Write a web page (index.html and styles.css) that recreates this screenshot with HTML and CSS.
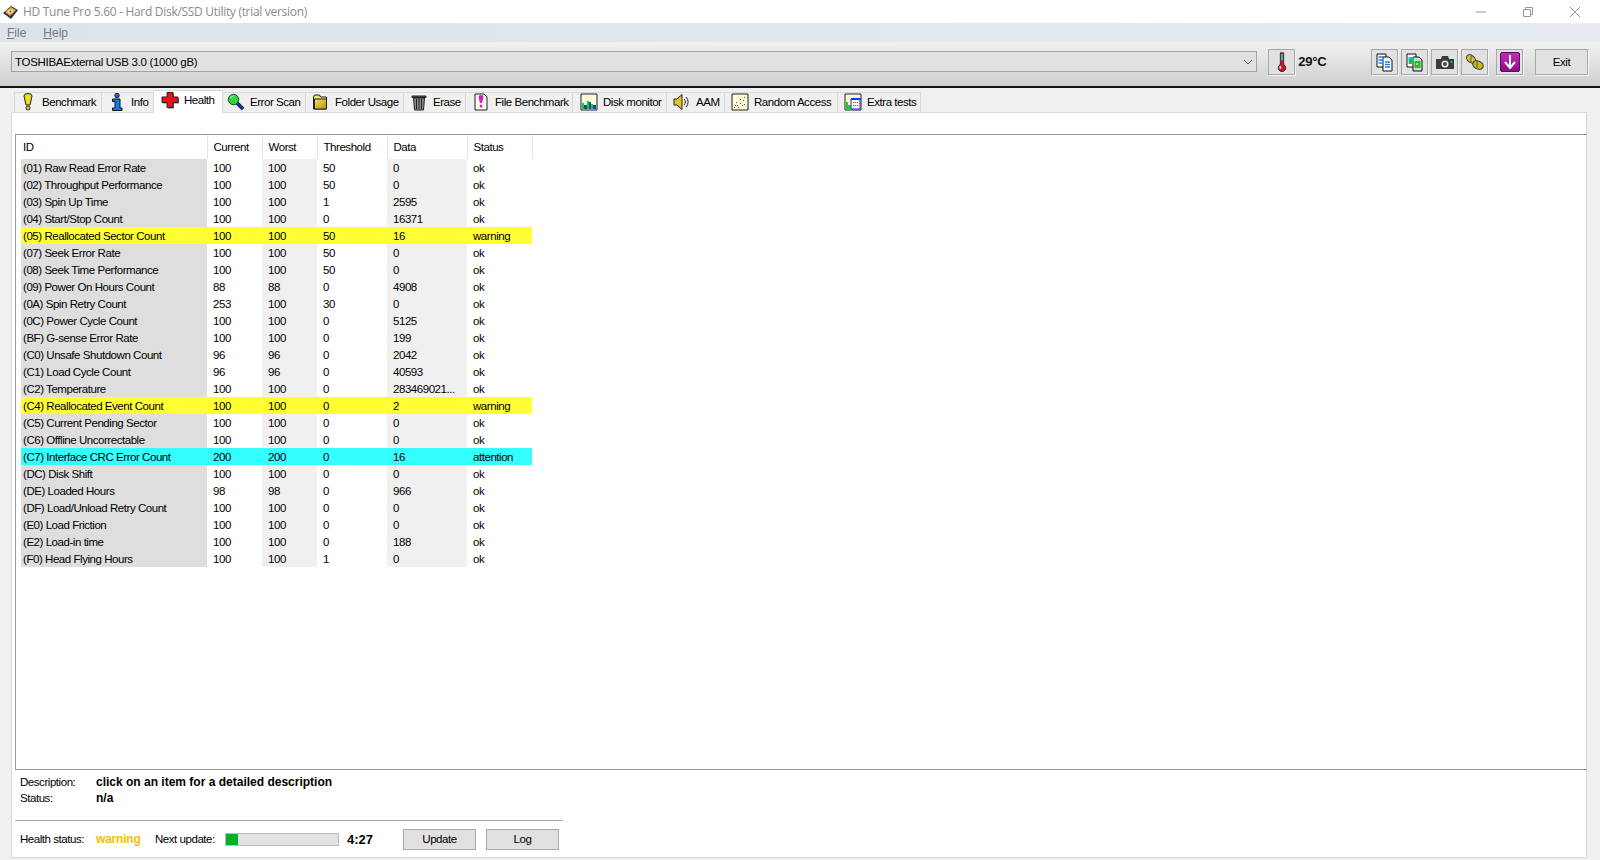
FILE: index.html
```html
<!DOCTYPE html>
<html lang="en">
<head>
    <meta charset="UTF-8">
    <title>HD Tune Pro 5.60 - Hard Disk/SSD Utility (trial version)</title>
    <link rel="stylesheet" href="styles.css">
</head>
<body>
    <div id="titlebar">
        <svg class="appicon" viewBox="0 0 18 18"><path d="M1 10 9 3l7 4-7 9z" fill="#333"/><path d="M3 9l6-5 5 3-6 6z" fill="#e0a848"/><ellipse cx="8.500" cy="8.500" rx="3" ry="2" fill="#f4d890"/><circle cx="8.500" cy="8.500" r="1" fill="#555"/></svg>
        <span class="titletext">HD Tune Pro 5.60 - Hard Disk/SSD Utility (trial version)</span>
        <div class="winbtns">
            <svg viewBox="0 0 12 12"><path d="M1 6h10" stroke="#999" fill="none"/></svg>
            <svg viewBox="0 0 12 12"><path d="M1.500 3.500h7v7h-7zM3.500 3.500v-2h7v7h-2" stroke="#999" fill="none"/></svg>
            <svg viewBox="0 0 12 12"><path d="M1 1l10 10M11 1 1 11" stroke="#999" fill="none"/></svg>
        </div>
    </div>
    <div id="menubar">
        <span><u>F</u>ile</span>
        <span><u>H</u>elp</span>
    </div>
    <div id="toolbar">
        <div class="combo">
            <span>TOSHIBAExternal USB 3.0 (1000 gB)</span>
            <svg viewBox="0 0 10 6"><path d="M1 1l4 4 4-4" stroke="#555" fill="none"/></svg>
        </div>
        <div class="toolbtn temp">
            <svg viewBox="0 0 18 24"><path d="M7 1h4v14a4.500 4.500 0 1 1-4 0z" fill="#c8181c" stroke="#222"/><path d="M8 2h2v8H8z" fill="#30c8d8"/><path d="M6 17h2v3H6z" fill="#fff"/></svg>
        </div>
        <span class="temptext">29°C</span>
        <div class="toolgroup">
            <div class="toolbtn">
                <svg viewBox="0 0 20 20"><path d="M2 2h9v13H2z" fill="#fff" stroke="#111"/><path d="M8 5h6l3 3v11H8z" fill="#fff" stroke="#111"/><path d="M3.500 5h6M3.500 8h4M3.500 11h4M10 10h5M10 12.500h5M10 15h5" stroke="#1880f0" stroke-width="1.300"/></svg>
            </div>
            <div class="toolbtn">
                <svg viewBox="0 0 20 20"><path d="M2 2h9v13H2z" fill="#fff" stroke="#111"/><path d="M8 5h6l3 3v11H8z" fill="#d8d8d8" stroke="#111"/><path d="M3.500 5h5v7h-5z" fill="#18b8d8"/><path d="M4.500 7h3v4h-3z" fill="#20c020"/><path d="M9.500 9h6v7h-6z" fill="#18c030"/><path d="M11 11h2v2h-2z" fill="#e0d020"/></svg>
            </div>
            <div class="toolbtn">
                <svg viewBox="0 0 20 20"><path d="M1 7h5l1-3h6l1 3h5v10H1z" fill="#3a3a3a"/><circle cx="10" cy="12" r="3.500" fill="#f0f0f0"/><circle cx="10" cy="12" r="2" fill="#444"/><path d="M15.500 9h2v2h-2z" fill="#20c040"/></svg>
            </div>
            <div class="toolbtn">
                <svg viewBox="0 0 20 20"><ellipse cx="6" cy="7" rx="5" ry="3.500" transform="rotate(40 6 7)" fill="#d8c820" stroke="#333"/><ellipse cx="13" cy="13" rx="5.500" ry="4" transform="rotate(25 13 13)" fill="#c8b818" stroke="#333"/><path d="M6 2v8M12 9v7" stroke="#777" stroke-width="1.500"/></svg>
            </div>
            <div class="toolbtn purple">
                <svg viewBox="0 0 20 20"><defs><linearGradient id="purplefill" x1="0" y1="0" x2="0" y2="1"><stop offset="0" stop-color="#c030b8"/><stop offset="1" stop-color="#90088c"/></linearGradient></defs><rect x="0.500" y="0.500" width="19" height="19" rx="1.500" fill="url(#purplefill)" stroke="#60085c"/><path d="M10 3v12M5 10l5 6 5-6" stroke="#fff" stroke-width="2" fill="none"/></svg>
            </div>
        </div>
        <div class="exitbtn">Exit</div>
    </div>
    <div id="tabs">
        <div class="tab">
            <svg viewBox="0 0 18 18"><path d="M5 3a4 2.500 0 0 1 8 0l-2 9H7z" fill="#e8e020" stroke="#222"/><circle cx="9" cy="15" r="2" fill="#e8e020" stroke="#222"/></svg>
            <span>Benchmark</span>
        </div>
        <div class="tab">
            <svg viewBox="0 0 18 18"><circle cx="9" cy="2.500" r="2.200" fill="#1878e8" stroke="#111"/><path d="M4.500 6H12v9h2v2.500H4.500V15H7V8.500H4.500z" fill="#1878e8" stroke="#111"/></svg>
            <span>Info</span>
        </div>
        <div class="tab active">
            <svg viewBox="0 0 18 18"><path d="M7 2.500h6v4.500h5v5.500h-5v5H7v-5H2V7h5z" fill="#777"/><path d="M6 1.500h6v4.500h5v5.500h-5v5H6v-5H1V6h5z" fill="#e8141c" stroke="#222"/></svg>
            <span>Health</span>
        </div>
        <div class="tab">
            <svg viewBox="0 0 18 18"><path d="M10 10l6 6" stroke="#111" stroke-width="3.500"/><path d="M10 10l6 6" stroke="#1038c8" stroke-width="2"/><circle cx="6.500" cy="6.500" r="5.200" fill="#30d838" stroke="#185018"/><path d="M3.500 5a3 3 0 0 1 3-2" stroke="#d0ffd0" fill="none"/></svg>
            <span>Error Scan</span>
        </div>
        <div class="tab">
            <svg viewBox="0 0 18 18"><defs><linearGradient id="folderfill" x1="0" y1="0" x2="1" y2="1"><stop offset="0" stop-color="#f4e468"/><stop offset="1" stop-color="#c09000"/></linearGradient></defs><path d="M1.500 4l1-2h5l1 2h6v12h-13z" fill="#f0e070" stroke="#222"/><path d="M2.500 6h12v10h-12z" fill="url(#folderfill)" stroke="#222"/></svg>
            <span>Folder Usage</span>
        </div>
        <div class="tab">
            <svg viewBox="0 0 18 18"><path d="M2 3h14v1.500H2z" fill="#555" stroke="#222"/><path d="M3.500 5h11l-1 12h-9z" fill="#8a8a8a" stroke="#222"/><path d="M6.500 6v10M9 6v10M11.500 6v10" stroke="#222"/></svg>
            <span>Erase</span>
        </div>
        <div class="tab">
            <svg viewBox="0 0 18 18"><path d="M3 1h9l3 3v13H3z" fill="#fffce8" stroke="#222"/><path d="M6.500 4a2.500 2 0 0 1 5 0l-1.500 6H8z" fill="#d020c8"/><circle cx="9" cy="13" r="1.500" fill="#d020c8"/></svg>
            <span>File Benchmark</span>
        </div>
        <div class="tab">
            <svg viewBox="0 0 18 18"><path d="M1 1h16v16H1z" fill="#fdfbd8" stroke="#222"/><path d="M2 10h2v6H2zM7 8h2v8H7zM11 11h2v5h-2z" fill="#10d818"/><path d="M4 12h3v4H4zM9 9h2v7H9zM13 12h3v4h-3z" fill="#1838d8"/></svg>
            <span>Disk monitor</span>
        </div>
        <div class="tab">
            <svg viewBox="0 0 18 18"><path d="M1 6h3l5-4.500v15L4 12H1z" fill="#e0c820" stroke="#222"/><path d="M11 6a4 4 0 0 1 0 6M13 4a7 7 0 0 1 0 10" stroke="#222" fill="none"/></svg>
            <span>AAM</span>
        </div>
        <div class="tab">
            <svg viewBox="0 0 18 18"><path d="M1 1h16v16H1z" fill="#fdfbd8" stroke="#222"/><path d="M3 14h1v1H3zM6 12h1v1H6zM9 10h1v1H9zM12 7h1v1h-1zM7 14h1v1H7zM11 12h1v1h-1z" fill="#e02020"/><path d="M5 9h1v1H5zM9 6h1v1H9zM13 11h1v1h-1zM13 4h1v1h-1zM4 12h1v1H4z" fill="#2040d8"/></svg>
            <span>Random Access</span>
        </div>
        <div class="tab">
            <svg viewBox="0 0 18 18"><path d="M1 1h16v16H1z" fill="#fdfbd8" stroke="#222"/><path d="M2 9h2v7H2zM4 12h3v4H4z" fill="#10d818"/><path d="M7 6h9v10H7z" fill="#fff" stroke="#1838d8"/><path d="M7 5h10v2H7z" fill="#1838d8"/><path d="M9 9h1v1H9zM11 9h1v1h-1zM13 9h1v1h-1zM9 12h1v1H9zM11 12h1v1h-1zM13 12h1v1h-1z" fill="#e02020"/></svg>
            <span>Extra tests</span>
        </div>
    </div>
    <div id="panel">
        <div id="tablebox">
            <table>
                <thead>
                    <tr><th>ID</th><th>Current</th><th>Worst</th><th>Threshold</th><th>Data</th><th>Status</th></tr>
                </thead>
                <tbody>
                    <tr><td>(01) Raw Read Error Rate</td><td>100</td><td>100</td><td>50</td><td>0</td><td>ok</td></tr>
                    <tr><td>(02) Throughput Performance</td><td>100</td><td>100</td><td>50</td><td>0</td><td>ok</td></tr>
                    <tr><td>(03) Spin Up Time</td><td>100</td><td>100</td><td>1</td><td>2595</td><td>ok</td></tr>
                    <tr><td>(04) Start/Stop Count</td><td>100</td><td>100</td><td>0</td><td>16371</td><td>ok</td></tr>
                    <tr class="warn"><td>(05) Reallocated Sector Count</td><td>100</td><td>100</td><td>50</td><td>16</td><td>warning</td></tr>
                    <tr><td>(07) Seek Error Rate</td><td>100</td><td>100</td><td>50</td><td>0</td><td>ok</td></tr>
                    <tr><td>(08) Seek Time Performance</td><td>100</td><td>100</td><td>50</td><td>0</td><td>ok</td></tr>
                    <tr><td>(09) Power On Hours Count</td><td>88</td><td>88</td><td>0</td><td>4908</td><td>ok</td></tr>
                    <tr><td>(0A) Spin Retry Count</td><td>253</td><td>100</td><td>30</td><td>0</td><td>ok</td></tr>
                    <tr><td>(0C) Power Cycle Count</td><td>100</td><td>100</td><td>0</td><td>5125</td><td>ok</td></tr>
                    <tr><td>(BF) G-sense Error Rate</td><td>100</td><td>100</td><td>0</td><td>199</td><td>ok</td></tr>
                    <tr><td>(C0) Unsafe Shutdown Count</td><td>96</td><td>96</td><td>0</td><td>2042</td><td>ok</td></tr>
                    <tr><td>(C1) Load Cycle Count</td><td>96</td><td>96</td><td>0</td><td>40593</td><td>ok</td></tr>
                    <tr><td>(C2) Temperature</td><td>100</td><td>100</td><td>0</td><td>283469021...</td><td>ok</td></tr>
                    <tr class="warn"><td>(C4) Reallocated Event Count</td><td>100</td><td>100</td><td>0</td><td>2</td><td>warning</td></tr>
                    <tr><td>(C5) Current Pending Sector</td><td>100</td><td>100</td><td>0</td><td>0</td><td>ok</td></tr>
                    <tr><td>(C6) Offline Uncorrectable</td><td>100</td><td>100</td><td>0</td><td>0</td><td>ok</td></tr>
                    <tr class="attn"><td>(C7) Interface CRC Error Count</td><td>200</td><td>200</td><td>0</td><td>16</td><td>attention</td></tr>
                    <tr><td>(DC) Disk Shift</td><td>100</td><td>100</td><td>0</td><td>0</td><td>ok</td></tr>
                    <tr><td>(DE) Loaded Hours</td><td>98</td><td>98</td><td>0</td><td>966</td><td>ok</td></tr>
                    <tr><td>(DF) Load/Unload Retry Count</td><td>100</td><td>100</td><td>0</td><td>0</td><td>ok</td></tr>
                    <tr><td>(E0) Load Friction</td><td>100</td><td>100</td><td>0</td><td>0</td><td>ok</td></tr>
                    <tr><td>(E2) Load-in time</td><td>100</td><td>100</td><td>0</td><td>188</td><td>ok</td></tr>
                    <tr><td>(F0) Head Flying Hours</td><td>100</td><td>100</td><td>1</td><td>0</td><td>ok</td></tr>
                </tbody>
            </table>
        </div>
        <div class="descrow">
            <span class="lbl">Description:</span><b>click on an item for a detailed description</b>
        </div>
        <div class="descrow">
            <span class="lbl">Status:</span><b>n/a</b>
        </div>
        <div class="statusrow">
            <span class="lbl">Health status:</span>
            <b class="hwarn">warning</b>
            <span class="nextlbl">Next update:</span>
            <div class="progress"><div class="fill"></div></div>
            <b class="time">4:27</b>
            <div class="btn">Update</div>
            <div class="btn">Log</div>
        </div>
    </div>
</body>
</html>
```

FILE: styles.css
```css
*{
    margin: 0;
    padding: 0;
    box-sizing: border-box;
}
body{
    width: 1600px;
    height: 860px;
    overflow: hidden;
    background-color: #f0f0f0;
    font-family: "Liberation Sans", Arial, sans-serif;
    font-size: 11.5px;
    letter-spacing: -0.45px;
    color: #000;
    display: flex;
    flex-direction: column;
}
#titlebar{
    height: 23px;
    background-color: #fff;
    display: flex;
    align-items: center;
    padding-left: 2px;
}
.appicon{
    width: 18px;
    height: 18px;
}
.titletext{
    margin-left: 3px;
    font-family: "Open Sans", sans-serif;
    font-size: 12px;
    letter-spacing: -0.3px;
    color: #8a8a8a;
}
.winbtns{
    margin-left: auto;
    display: flex;
    gap: 35px;
    padding-right: 19px;
}
.winbtns svg{
    width: 12px;
    height: 12px;
}
#menubar{
    height: 19px;
    background: linear-gradient(to right, #dbe3eb, #e7ecf3);
    display: flex;
    align-items: center;
    gap: 17px;
    padding-left: 7px;
    font-size: 12px;
    letter-spacing: 0;
    color: #777;
}
#toolbar{
    height: 46px;
    background: linear-gradient(#f1f1f1, #cfcfcf);
    border-bottom: 2px solid #111;
    display: flex;
    align-items: flex-start;
    padding: 7px 12px 0 11px;
}
.combo{
    width: 1249px;
    height: 21px;
    margin-top: 2px;
    border: 1px solid #a2a2a2;
    background-color: #e1e1e1;
    display: flex;
    align-items: center;
    justify-content: space-between;
    padding: 0 3px 0 3px;
    letter-spacing: -0.3px;
}
.combo svg{
    width: 10px;
    height: 6px;
}
.toolbtn{
    width: 27px;
    height: 26px;
    border: 1px solid #a8a8a8;
    box-shadow: 1px 1px 0 #f4f4f4;
    background-color: #e1e1e1;
    display: flex;
    align-items: center;
    justify-content: center;
}
.toolbtn svg{
    width: 20px;
    height: 20px;
}
.temp{
    margin-left: 11px;
}
.temptext{
    width: 32px;
    margin-left: 3px;
    line-height: 26px;
    font-size: 13px;
    font-weight: bold;
    letter-spacing: -0.2px;
    color: #111;
}
.toolgroup{
    display: flex;
    gap: 3px;
    margin-left: 41px;
}
.purple{
    margin-left: 5px;
}
.exitbtn{
    width: 53px;
    height: 26px;
    margin-left: 12px;
    border: 1px solid #a8a8a8;
    box-shadow: 1px 1px 0 #f4f4f4;
    background-color: #e1e1e1;
    text-align: center;
    line-height: 24px;
}
#tabs{
    height: 24px;
    padding: 2px 0 0 14px;
    display: grid;
    grid-template-columns: 88px 52px 69px 83px 98px 62px 107px 94px 58px 113px 83px;
    align-items: end;
    justify-content: start;
}
.tab{
    height: 20px;
    background-color: #f0f0f0;
    border: 1px solid #d9d9d9;
    border-bottom: 0;
    border-left: 0;
    display: flex;
    align-items: center;
    gap: 5px;
    padding: 0 0 2px 6px;
    white-space: nowrap;
}
.tab:first-child{
    border-left: 1px solid #d9d9d9;
    padding-left: 4px;
}
.tab:nth-child(3),
.tab:nth-child(8){
    padding-left: 7px;
}
.tab:nth-child(4){
    padding-left: 4px;
}
.tab svg{
    width: 18px;
    height: 18px;
    flex: none;
}
.tab.active{
    height: 23px;
    background-color: #fff;
    margin-bottom: -1px;
    position: relative;
    padding-bottom: 4px;
}
#panel{
    width: 1576px;
    height: 746px;
    margin-left: 11px;
    background-color: #fff;
    border: 1px solid #d9d9d9;
    padding: 21px 0 0 3px;
    display: flex;
    flex-direction: column;
}
#tablebox{
    width: 1572px;
    height: 636px;
    flex: none;
    border: 1px solid #9a9aa2;
    border-right: 0;
    padding-left: 5px;
}
table{
    width: 511px;
    table-layout: fixed;
    border-collapse: collapse;
}
th{
    height: 24px;
    font-weight: normal;
    text-align: left;
    padding-left: 6px;
    border-right: 1px solid #e5e5e5;
}
th:first-child{
    width: 186px;
    padding-left: 2px;
}
th:nth-child(2),
th:nth-child(3){
    width: 55px;
}
th:nth-child(4){
    width: 70px;
}
th:nth-child(5){
    width: 80px;
}
th:nth-child(6){
    width: 65px;
}
td{
    height: 17px;
    padding: 0 0 0 6px;
    white-space: nowrap;
    overflow: hidden;
}
td:first-child{
    padding-left: 2px;
    background-color: #dedede;
}
td:nth-child(3),
td:nth-child(5){
    background-color: #f0f0f0;
}
tr.warn td{
    background-color: #ffff33;
}
tr.attn td{
    background-color: #33ffff;
}
.descrow{
    height: 16px;
    display: flex;
    align-items: center;
    padding-left: 5px;
}
.descrow:nth-child(2){
    margin-top: 4px;
}
.descrow + .descrow{
    margin-top: 1px;
}
.lbl{
    width: 76px;
    flex: none;
}
.descrow b{
    font-size: 12px;
    letter-spacing: 0;
}
.statusrow{
    width: 548px;
    height: 38px;
    margin-top: 14px;
    border-top: 1px solid #a8a8a8;
    display: flex;
    align-items: center;
    padding-left: 5px;
}
.statusrow > *{
    flex: none;
}
.hwarn{
    color: #f5c000;
    width: 59px;
    font-size: 12px;
    letter-spacing: -0.2px;
}
.nextlbl{
    width: 70px;
}
.progress{
    width: 114px;
    height: 13px;
    background-color: #e2e2e2;
    border: 1px solid #bcbcbc;
}
.fill{
    width: 12px;
    height: 100%;
    background-color: #06b025;
}
.time{
    width: 56px;
    margin-left: 8px;
    font-size: 13px;
    letter-spacing: 0;
}
.btn{
    width: 73px;
    height: 21px;
    border: 1px solid #a8a8a8;
    background-color: #e1e1e1;
    text-align: center;
    line-height: 19px;
}
.btn + .btn{
    margin-left: 10px;
}
```
